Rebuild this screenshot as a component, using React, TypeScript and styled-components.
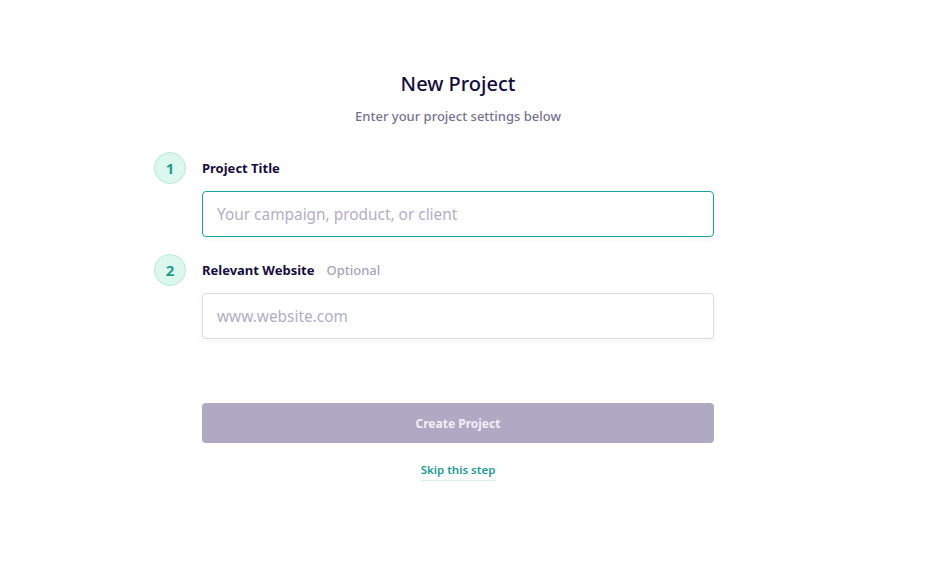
import React from 'react';
import styled, { createGlobalStyle } from 'styled-components';

const GlobalStyle = createGlobalStyle`
  html, body {
    margin: 0;
    padding: 0;
    background: #ffffff;
    font-family: 'Noto Sans', 'Liberation Sans', sans-serif;
  }
`;

const Page = styled.main`
  width: 944px;
  height: 563px;
  padding-top: 70px;
  box-sizing: border-box;
`;

const Header = styled.header`
  margin-left: 202px;
  width: 512px;
  text-align: center;
`;

const Title = styled.h1`
  margin: 0;
  font-size: 20px;
  line-height: 28px;
  font-weight: 500;
  color: #140c3c;
`;

const Subtitle = styled.p`
  margin: 8px 0 0;
  font-size: 13px;
  line-height: 20px;
  font-weight: 500;
  color: #77738f;
`;

const Steps = styled.ol`
  list-style: none;
  margin: 26px 0 0 154px;
  padding: 0;
  display: flex;
  flex-direction: column;
  gap: 17px;
`;

const Step = styled.li`
  display: grid;
  grid-template-columns: 32px 512px;
  column-gap: 16px;
  row-gap: 7px;
  align-items: center;
`;

const Badge = styled.span`
  width: 32px;
  height: 32px;
  box-sizing: border-box;
  border-radius: 50%;
  background: #dcf7ee;
  border: 1px solid #b4ead8;
  color: #1d9c8c;
  font-size: 15px;
  font-weight: 700;
  display: flex;
  align-items: center;
  justify-content: center;
`;

const Label = styled.label`
  font-size: 13px;
  font-weight: 700;
  color: #150d3e;
  display: flex;
  gap: 12px;
`;

const Hint = styled.span`
  font-weight: 500;
  color: #a8a4b8;
`;

const Input = styled.input<{ $active?: boolean }>`
  grid-column: 2;
  height: 46px;
  box-sizing: border-box;
  border-radius: 4px;
  border: 1px solid ${p => (p.$active ? '#1ba39a' : '#dcd9e8')};
  box-shadow: 0 2px 6px rgba(40, 30, 90, 0.05);
  padding: 0 14px;
  font-family: inherit;
  font-size: 15.4px;
  color: #150d3e;
  outline: none;
  &::placeholder {
    color: #b3aec4;
  }
`;

const Actions = styled.div`
  margin: 64px 0 0 202px;
  width: 512px;
  display: flex;
  flex-direction: column;
  align-items: center;
`;

const Button = styled.button`
  width: 100%;
  height: 40px;
  border: none;
  border-radius: 4px;
  background: #b0a9c4;
  color: #f1eff6;
  font-family: inherit;
  font-size: 12px;
  font-weight: 700;
  cursor: not-allowed;
`;

const Skip = styled.a`
  margin-top: 19px;
  font-size: 11.5px;
  font-weight: 600;
  color: #1d9a94;
  text-decoration: none;
  padding-bottom: 3px;
  border-bottom: 1px solid #d6f0e6;
`;

const steps = [
  { n: 1, label: 'Project Title', placeholder: 'Your campaign, product, or client', active: true },
  { n: 2, label: 'Relevant Website', hint: 'Optional', placeholder: 'www.website.com' },
];

export default function App() {
  return (
    <Page>
      <GlobalStyle />
      <Header>
        <Title>New Project</Title>
        <Subtitle>Enter your project settings below</Subtitle>
      </Header>
      <Steps>
        {steps.map(s => (
          <Step key={s.n}>
            <Badge>{s.n}</Badge>
            <Label>
              {s.label}
              {s.hint && <Hint>{s.hint}</Hint>}
            </Label>
            <Input $active={s.active} placeholder={s.placeholder} />
          </Step>
        ))}
      </Steps>
      <Actions>
        <Button disabled>Create Project</Button>
        <Skip href="#">Skip this step</Skip>
      </Actions>
    </Page>
  );
}
